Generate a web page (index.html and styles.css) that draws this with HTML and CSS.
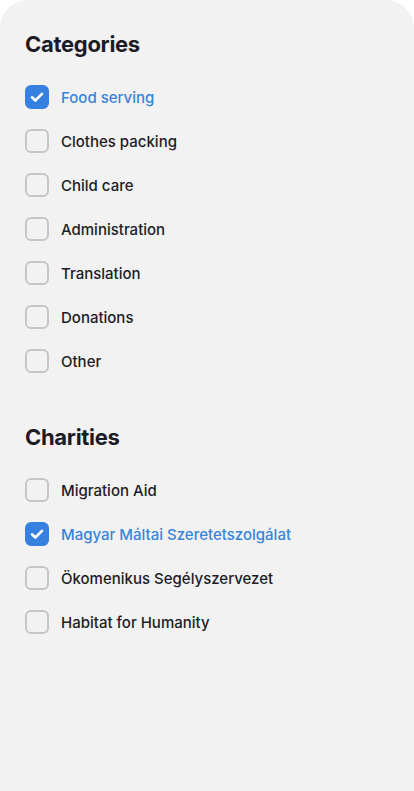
FILE: index.html
```html
<!DOCTYPE html>
<html lang="en">
<head>
<meta charset="utf-8">
<link rel="stylesheet" href="styles.css">
</head>
<body>
<div class="panel">
  <section class="group">
    <h2 class="group-title">Categories</h2>
    <ul class="options">
      <li class="option checked"><span class="box"><svg viewBox="0 0 24 24" width="24" height="24"><path d="M7 12.3l3.3 3.2L17 8.8" fill="none" stroke="#fff" stroke-width="2.6" stroke-linecap="round" stroke-linejoin="round"/></svg></span><span class="label">Food serving</span></li>
      <li class="option"><span class="box"></span><span class="label">Clothes packing</span></li>
      <li class="option"><span class="box"></span><span class="label">Child care</span></li>
      <li class="option"><span class="box"></span><span class="label">Administration</span></li>
      <li class="option"><span class="box"></span><span class="label">Translation</span></li>
      <li class="option"><span class="box"></span><span class="label">Donations</span></li>
      <li class="option"><span class="box"></span><span class="label">Other</span></li>
    </ul>
  </section>
  <section class="group">
    <h2 class="group-title">Charities</h2>
    <ul class="options">
      <li class="option"><span class="box"></span><span class="label">Migration Aid</span></li>
      <li class="option checked"><span class="box"><svg viewBox="0 0 24 24" width="24" height="24"><path d="M7 12.3l3.3 3.2L17 8.8" fill="none" stroke="#fff" stroke-width="2.6" stroke-linecap="round" stroke-linejoin="round"/></svg></span><span class="label">Magyar Máltai Szeretetszolgálat</span></li>
      <li class="option"><span class="box"></span><span class="label">Ökomenikus Segélyszervezet</span></li>
      <li class="option"><span class="box"></span><span class="label">Habitat for Humanity</span></li>
    </ul>
  </section>
</div>
</body>
</html>
```

FILE: styles.css
```css
* { box-sizing: border-box; }
html, body { margin: 0; padding: 0; background: #ffffff; }
body { font-family: Inter, Roboto, "Liberation Sans", sans-serif; }
.panel {
  background: #f2f2f2;
  border-radius: 28px 28px 0 0;
  min-height: 791px;
  padding: 30px 25px 0;
}
.group + .group { margin-top: 40px; }
.group-title {
  margin: 0 0 17px;
  font-size: 22px;
  line-height: 28px;
  font-weight: 700;
  color: #1b1b26;
  letter-spacing: -0.3px;
}
.options { list-style: none; margin: 0; padding: 0; }
.option {
  height: 44px;
  display: flex;
  align-items: center;
  gap: 12px;
}
.box {
  width: 24px;
  height: 24px;
  border: 2px solid #c6c6c6;
  border-radius: 6px;
  flex: none;
  position: relative;
}
.box svg { position: absolute; left: -2px; top: -2px; }
.option.checked .box { background: #3681e0; border-color: #3681e0; }
.label {
  font-size: 15px;
  font-weight: 500;
  color: #1c1c27;
}
.option.checked .label { color: #3784da; }
```
